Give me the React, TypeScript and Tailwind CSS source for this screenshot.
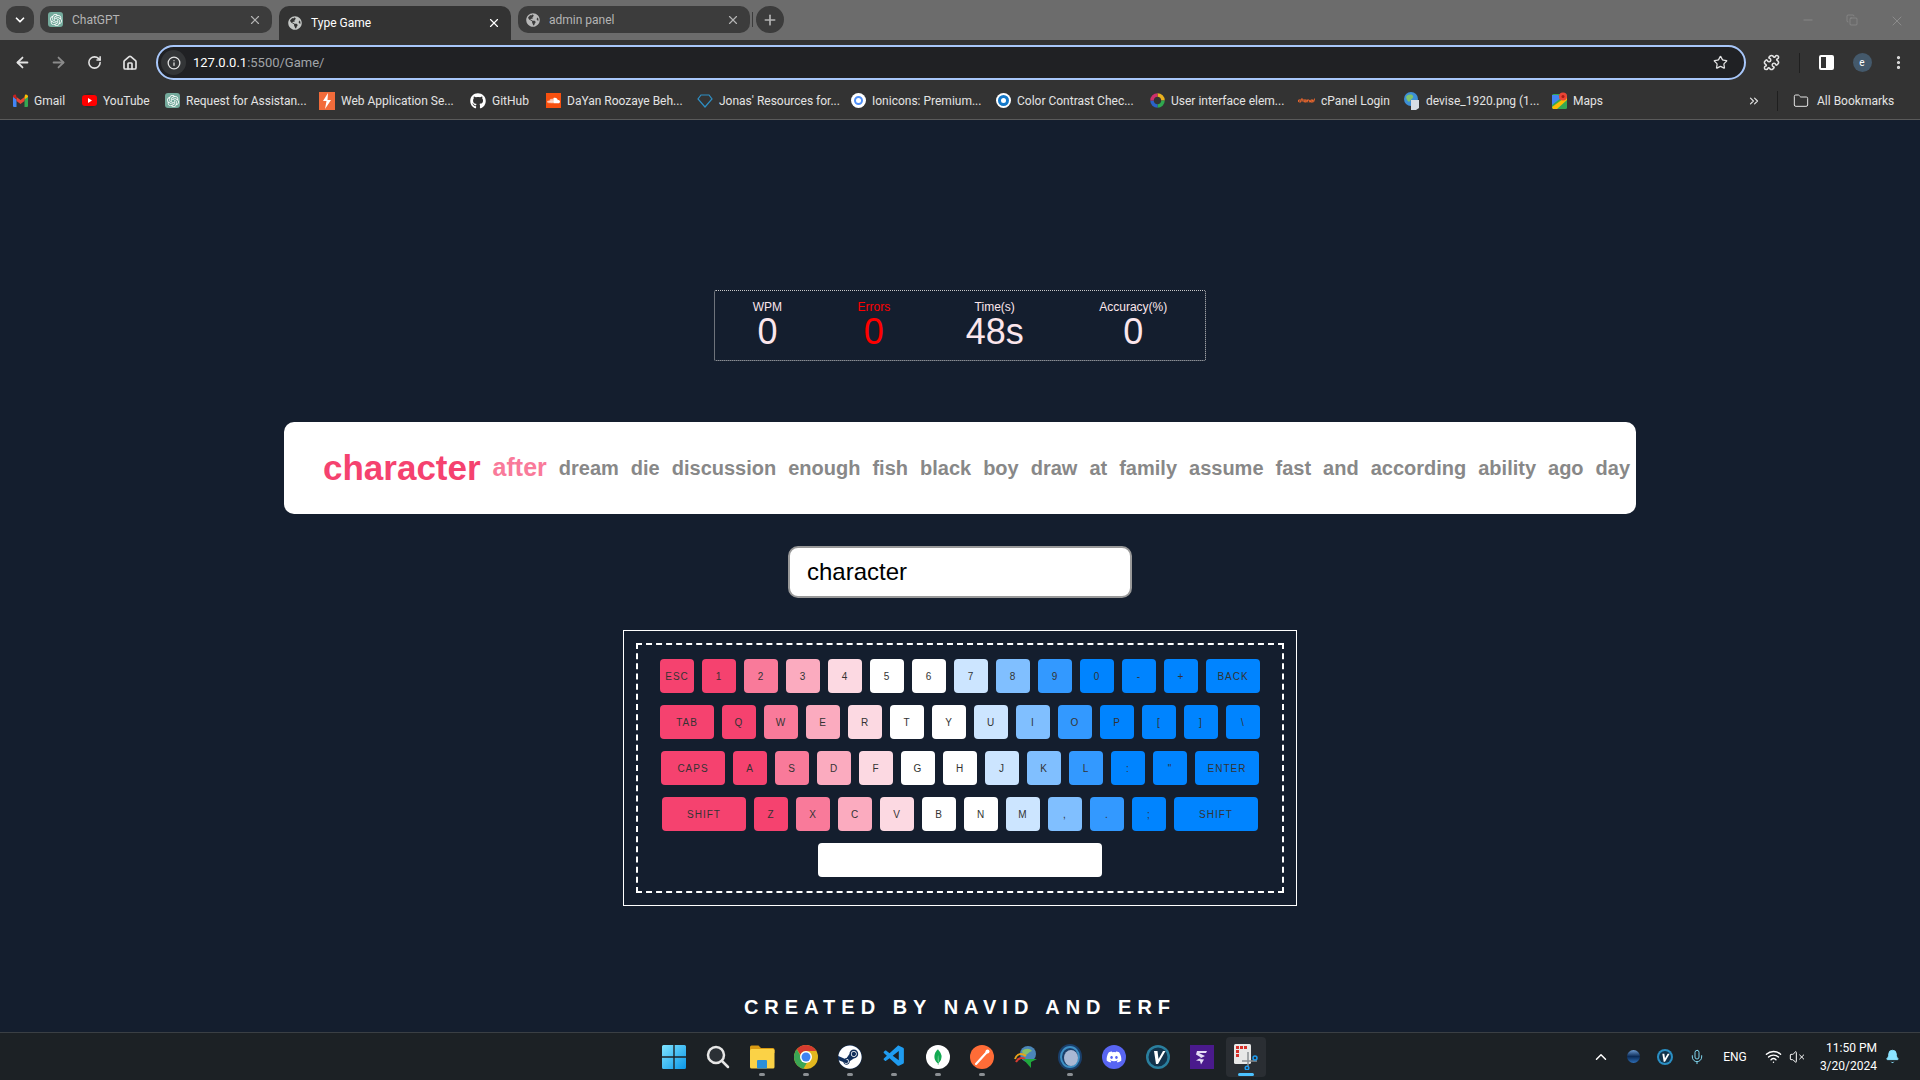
import React from "react";
import {
  ArrowLeft,
  ArrowRight,
  RotateCw,
  Home,
  Info,
  Star,
  Puzzle,
  EllipsisVertical,
  X,
  Plus,
  ChevronDown,
  ChevronUp,
  ChevronsRight,
  Folder,
  Minus,
  Copy,
  Mic,
  Wifi,
  VolumeX,
  Bell,
} from "lucide-react";
import { FaGlobeAmericas, FaGithub, FaSoundcloud, FaDiscord, FaSteam } from "react-icons/fa";
import { SiOpenai, SiCpanel, SiMongodb } from "react-icons/si";
import { VscVscode } from "react-icons/vsc";

const uiFont = "font-['Roboto',sans-serif]";

const OpenAiIcon = () => (
  <span className="flex w-[15px] h-[15px] items-center justify-center rounded-[3px] bg-[#74aa9c]">
    <SiOpenai className="text-white" size={12} />
  </span>
);

const GmailIcon = () => (
  <svg width="15" height="13" viewBox="0 0 15 13">
    <path d="M0 2v10a1 1 0 0 0 1 1h2.5V5.5z" fill="#4285f4" />
    <path d="M15 2v10a1 1 0 0 1-1 1h-2.5V5.5z" fill="#34a853" />
    <path d="M3.5 3v4L7.5 10l4-3V3l-4 3z" fill="#ea4335" />
    <path d="M0 2.5C0 .8 2 0 3 .9l.5 2.1v2.5L0 3z" fill="#c5221f" />
    <path d="M15 2.5C15 .8 13 0 12 .9l-.5 2.1v2.5L15 3z" fill="#fbbc04" />
  </svg>
);

const YoutubeIcon = () => (
  <span className="flex w-[15px] h-[15px] items-center justify-center rounded-full bg-[#2b2b2b]">
    <svg width="15" height="11" viewBox="0 0 15 11">
      <rect width="15" height="11" rx="3" fill="#ff0000" />
      <path d="M6 3v5l4-2.500z" fill="#fff" />
    </svg>
  </span>
);

const BurpIcon = () => (
  <svg width="16" height="18" viewBox="0 0 16 18">
    <rect width="16" height="18" fill="#f26b3a" />
    <path d="M9 1 4 9h3.500L6 17l6-9H8.500z" fill="#fff" />
  </svg>
);

const JonasIcon = () => (
  <svg width="16" height="14" viewBox="0 0 16 14" fill="none" stroke="#2f8fc4" strokeWidth="1.2">
    <path d="M4 1h8l3 4-7 8-7-8z" />
  </svg>
);

const IoniconsIcon = () => (
  <span className="flex w-[15px] h-[15px] items-center justify-center rounded-full bg-white">
    <span className="w-[9px] h-[9px] rounded-full border-2 border-[#4f8ff7]" />
  </span>
);

const ContrastIcon = () => (
  <span className="flex w-[15px] h-[15px] items-center justify-center rounded-full bg-white">
    <span className="flex w-[11px] h-[11px] items-center justify-center rounded-full bg-[#1478c8]">
      <span className="w-[5px] h-[5px] rounded-full bg-white" />
    </span>
  </span>
);

const UxIcon = () => (
  <svg width="15" height="15" viewBox="0 0 15 15" fill="none" strokeWidth="3.500">
    <path d="M7.500 2A5.500 5.500 0 0 1 13 7.500" stroke="#e8b01e" />
    <path d="M13 7.500A5.500 5.500 0 0 1 7.500 13" stroke="#2fa84f" />
    <path d="M7.500 13A5.500 5.500 0 0 1 2 7.500" stroke="#2a62c9" />
    <path d="M2 7.500A5.500 5.500 0 0 1 7.500 2" stroke="#cc2f6b" />
  </svg>
);

const DeviseIcon = () => (
  <svg width="17" height="18" viewBox="0 0 17 18">
    <circle cx="8" cy="7" r="7" fill="#3d8fd6" />
    <path d="M3 5c2-3 6-3 7-1s-2 3-3 5-3 0-4-4z" fill="#7fc36b" />
    <path d="M8 8h8v8l-3 2H8z" fill="#d7dde4" />
  </svg>
);

const MapsIcon = () => (
  <svg width="15" height="17" viewBox="0 0 15 17">
    <rect y="2" width="15" height="15" rx="1.500" fill="#34a853" />
    <path d="M0 15 15 4v4L5 17H1z" fill="#fbbc04" />
    <path d="M0 3h6l3 3-9 7z" fill="#4285f4" />
    <circle cx="11" cy="4.500" r="4" fill="#ea4335" />
    <circle cx="11" cy="4.500" r="1.500" fill="#a51d14" />
  </svg>
);

const bookmarks = [
  { label: "Gmail", icon: <GmailIcon />, width: "w-[69px]" },
  { label: "YouTube", icon: <YoutubeIcon />, width: "w-[83px]" },
  { label: "Request for Assistan...", icon: <OpenAiIcon />, width: "w-[154px]" },
  { label: "Web Application Se...", icon: <BurpIcon />, width: "w-[151px]" },
  { label: "GitHub", icon: <FaGithub size={16} className="text-white" />, width: "w-[76px]" },
  {
    label: "DaYan Roozaye Beh...",
    icon: (
      <span className="flex w-[15px] h-[15px] items-center justify-center bg-[#f7500f]">
        <FaSoundcloud size={13} className="text-white" />
      </span>
    ),
    width: "w-[151px]",
  },
  { label: "Jonas' Resources for...", icon: <JonasIcon />, width: "w-[154px]" },
  { label: "Ionicons: Premium...", icon: <IoniconsIcon />, width: "w-[145px]" },
  { label: "Color Contrast Chec...", icon: <ContrastIcon />, width: "w-[154px]" },
  { label: "User interface elem...", icon: <UxIcon />, width: "w-[148px]" },
  { label: "cPanel Login", icon: <SiCpanel size={17} className="text-[#ff6c2c]" />, width: "w-[105px]" },
  { label: "devise_1920.png (1...", icon: <DeviseIcon />, width: "w-[149px]" },
  { label: "Maps", icon: <MapsIcon />, width: "w-[60px]" },
];

const Tab = ({ title, icon, active }: { title: string; icon: React.ReactNode; active?: boolean }) => (
  <div
    className={
      active
        ? "flex items-center w-[232px] h-[34px] pl-[9px] pr-[10px] rounded-t-[10px] bg-[#333333] text-white self-start"
        : "flex items-center w-[232px] h-[27px] pl-[8px] pr-[10px] rounded-[10px] bg-[#3c3c3c] text-[#b4b4b4] self-start"
    }
  >
    {icon}
    <span className="ml-[9px] text-[12px] flex-1">{title}</span>
    <X size={14} strokeWidth={2} />
  </div>
);

const Chrome = () => (
  <header className={`shrink-0 ${uiFont}`}>
    <div className="relative flex h-[40px] pt-[6px] pl-[6px] bg-[#6c6c6c]">
      <div className="flex w-[28px] h-[27px] items-center justify-center rounded-[10px] bg-[#3c3c3c] text-white">
        <ChevronDown size={14} strokeWidth={3} />
      </div>
      <div className="ml-[6px] flex gap-[7px]">
        <Tab title="ChatGPT" icon={<OpenAiIcon />} />
        <Tab title="Type Game" active icon={<FaGlobeAmericas size={14} className="text-[#c4c7c5]" />} />
        <Tab title="admin panel" icon={<FaGlobeAmericas size={14} className="text-[#b8b8b8]" />} />
      </div>
      <div className="ml-[2px] mt-[6px] w-px h-[15px] bg-[#3c3c3c]" />
      <div className="ml-[3px] flex w-[28px] h-[27px] items-center justify-center rounded-full bg-[#3c3c3c] text-[#b4b4b4]">
        <Plus size={16} strokeWidth={2.500} />
      </div>
      <div className="ml-auto flex items-start text-[#9b9b9b] pt-[7px] pr-[15px] gap-[31px]">
        <Minus size={14} strokeWidth={1} />
        <Copy size={12} strokeWidth={1} className="mt-[1px]" />
        <X size={16} strokeWidth={1} />
      </div>
    </div>

    <div className="flex items-center h-[45px] pl-[4px] pr-[4px] pb-[5px] pt-[5px] bg-[#333333] text-[#e3e3e3]">
      <div className="flex w-[36px] justify-center"><ArrowLeft size={17} strokeWidth={2.500} /></div>
      <div className="flex w-[36px] justify-center text-[#8b8b8b]"><ArrowRight size={17} strokeWidth={2.500} /></div>
      <div className="flex w-[36px] justify-center"><RotateCw size={15} strokeWidth={2.500} /></div>
      <div className="flex w-[36px] justify-center"><Home size={16} strokeWidth={2.500} /></div>
      <div className="ml-[8px] flex flex-1 items-center h-[35px] pl-[3px] pr-[16px] rounded-full border-2 border-[#a8c7fa] bg-[#202124]">
        <span className="flex w-[25px] h-[25px] items-center justify-center rounded-full bg-[#333537]">
          <Info size={14} strokeWidth={2.200} />
        </span>
        <span className="ml-[7px] text-[13px] text-white">
          127.0.0.1<span className="text-[#a0a4a8]">:5500/Game/</span>
        </span>
        <Star size={15} strokeWidth={2} className="ml-auto" />
      </div>
      <div className="ml-[7px] flex w-[36px] justify-center"><Puzzle size={17} strokeWidth={2.200} /></div>
      <div className="ml-[10px] w-px h-[20px] bg-[#1f1f1f]" />
      <div className="ml-[8px] flex w-[36px] justify-center">
        <span className="flex w-[15px] h-[15px] justify-end rounded-[2px] border-2 border-white">
          <span className="w-[6px] bg-white" />
        </span>
      </div>
      <div className="flex w-[36px] justify-center">
        <span className="flex w-[19px] h-[19px] items-center justify-center rounded-full bg-[#44596b] text-[10px] text-white">e</span>
      </div>
      <div className="flex w-[36px] justify-center"><EllipsisVertical size={17} strokeWidth={2.500} /></div>
    </div>

    <div className="flex items-center h-[35px] pl-[13px] pb-[3px] bg-[#333333] text-[12px] text-[#e3e3e3] border-b border-[#5a5a5a]">
      {bookmarks.map((b) => (
        <div key={b.label} className={`flex items-center shrink-0 gap-[6px] whitespace-nowrap ${b.width}`}>
          {b.icon}
          <span>{b.label}</span>
        </div>
      ))}
      <ChevronsRight size={14} strokeWidth={2} className="ml-[135px]" />
      <div className="ml-[16px] w-px h-[20px] bg-[#1f1f1f]" />
      <Folder size={16} strokeWidth={1.500} className="ml-[15px]" />
      <span className="ml-[8px] whitespace-nowrap">All Bookmarks</span>
    </div>
  </header>
);

const StatCell = ({ label, value, red }: { label: string; value: string; red?: boolean }) => (
  <div className={red ? "flex flex-col items-center text-[#ff0000]" : "flex flex-col items-center text-[#fbe6ec]"}>
    <span className="text-[12px] leading-[14px]">{label}</span>
    <span className="text-[36px] leading-[36px]">{value}</span>
  </div>
);

const words = [
  "dream", "die", "discussion", "enough", "fish", "black", "boy", "draw", "at",
  "family", "assume", "fast", "and", "according", "ability", "ago", "day",
];

const pink1 = "bg-[#f5426f]";
const pink2 = "bg-[#f97a9a]";
const pink3 = "bg-[#fbabbf]";
const pink4 = "bg-[#fcd9e2]";
const white = "bg-white";
const blue1 = "bg-[#cce5ff]";
const blue2 = "bg-[#80bfff]";
const blue3 = "bg-[#3399ff]";
const blue4 = "bg-[#0084ff]";

type KeyDef = [string, string, string?];

const keyRows: KeyDef[][] = [
  [
    ["ESC", pink1], ["1", pink1], ["2", pink2], ["3", pink3], ["4", pink4], ["5", white], ["6", white],
    ["7", blue1], ["8", blue2], ["9", blue3], ["0", blue4], ["-", blue4], ["+", blue4], ["BACK", blue4, "w-[54px]"],
  ],
  [
    ["TAB", pink1, "w-[54px]"], ["Q", pink1], ["W", pink2], ["E", pink3], ["R", pink4], ["T", white], ["Y", white],
    ["U", blue1], ["I", blue2], ["O", blue3], ["P", blue4], ["[", blue4], ["]", blue4], ["\\", blue4],
  ],
  [
    ["CAPS", pink1, "w-[64px]"], ["A", pink1], ["S", pink2], ["D", pink3], ["F", pink4], ["G", white], ["H", white],
    ["J", blue1], ["K", blue2], ["L", blue3], [":", blue4], ['"', blue4], ["ENTER", blue4, "w-[64px]"],
  ],
  [
    ["SHIFT", pink1, "w-[84px]"], ["Z", pink1], ["X", pink2], ["C", pink3], ["V", pink4], ["B", white], ["N", white],
    ["M", blue1], [",", blue2], [".", blue3], [";", blue4], ["SHIFT", blue4, "w-[84px]"],
  ],
];

const Keyboard = () => (
  <div className="mt-[32px] w-[674px] h-[276px] p-[12px] border border-white">
    <div className="flex flex-col items-center gap-[12px] w-[648px] h-[250px] pt-[14px] border-2 border-dashed border-white">
      {keyRows.map((row, i) => (
        <div key={i} className="flex gap-[8px]">
          {row.map(([label, color, width], j) => (
            <div
              key={j}
              className={`flex h-[34px] items-center justify-center rounded-[4px] text-[10px] tracking-[1px] text-[#333333] ${color} ${width ?? "w-[34px]"}`}
            >
              {label}
            </div>
          ))}
        </div>
      ))}
      <div className="w-[284px] h-[34px] rounded-[4px] bg-white" />
    </div>
  </div>
);

const TaskIcon = ({ children, dot, active }: { children: React.ReactNode; dot?: boolean; active?: boolean }) => (
  <div className={active ? "relative flex w-[40px] h-[40px] mx-[2px] items-center justify-center rounded-[4px] bg-[#2a2e33]" : "relative flex w-[44px] h-[40px] items-center justify-center"}>
    {children}
    {dot && <span className="absolute bottom-[1px] w-[6px] h-[3px] rounded-full bg-[#8b8f93]" />}
    {active && <span className="absolute bottom-[1px] w-[16px] h-[3px] rounded-full bg-[#4cc2ff]" />}
  </div>
);

const Taskbar = () => (
  <footer className={`shrink-0 grid grid-cols-[1fr_auto_1fr] items-center h-[48px] bg-[#1c2125] border-t border-[#3a3f44] ${uiFont}`}>
    <div />
    <div className="flex">
      <TaskIcon>
        <svg width="24" height="24" viewBox="0 0 24 24">
          <defs>
            <linearGradient id="win" x1="0" y1="0" x2="1" y2="1">
              <stop offset="0" stopColor="#7fe4ff" />
              <stop offset="1" stopColor="#0a96e8" />
            </linearGradient>
          </defs>
          <path d="M0 1.500A1.500 1.500 0 0 1 1.500 0h9.800v11.300H0zM12.700 0h9.800A1.500 1.500 0 0 1 24 1.500v9.800H12.700zM0 12.700h11.300V24H1.500A1.500 1.500 0 0 1 0 22.500zM12.700 12.700H24v9.800a1.500 1.500 0 0 1-1.500 1.500h-9.800z" fill="url(#win)" />
        </svg>
      </TaskIcon>
      <TaskIcon>
        <svg width="24" height="24" viewBox="0 0 24 24" fill="none">
          <circle cx="10" cy="10" r="8" stroke="#e6e6e6" strokeWidth="2.500" fill="#2b3035" />
          <path d="m16 16 6 6" stroke="#e6e6e6" strokeWidth="2.500" strokeLinecap="round" />
        </svg>
      </TaskIcon>
      <TaskIcon dot>
        <svg width="26" height="24" viewBox="0 0 26 24">
          <path d="M1 2a1.500 1.500 0 0 1 1.500-1.500h7L12 3h12a1.500 1.500 0 0 1 1.500 1.500V8H1z" fill="#d99a12" />
          <rect x="1" y="4" width="24.500" height="19.500" rx="1.500" fill="#fbd246" />
          <rect x="8" y="15" width="10" height="8.500" rx="1" fill="#2a8fd8" />
        </svg>
      </TaskIcon>
      <TaskIcon dot>
        <svg width="24" height="24" viewBox="0 0 24 24">
          <circle cx="12" cy="12" r="12" fill="#e2b71e" />
          <path d="M12 0a12 12 0 0 1 10.400 6H12a6 6 0 0 0-5.600 3.800L2.800 4.300A12 12 0 0 1 12 0z" fill="#d63b2f" />
          <path d="M2.800 4.300 7.800 13a6 6 0 0 0 5 5l-3.400 5.700A12 12 0 0 1 2.800 4.300z" fill="#3aa655" />
          <circle cx="12" cy="12" r="6" fill="#fff" />
          <circle cx="12" cy="12" r="4.500" fill="#3f83f0" />
        </svg>
      </TaskIcon>
      <TaskIcon dot>
        <span className="flex w-[24px] h-[24px] items-center justify-center rounded-full bg-[#12305c]">
          <FaSteam size={24} className="text-white" />
        </span>
      </TaskIcon>
      <TaskIcon dot>
        <VscVscode size={25} className="text-[#1f9cf0]" />
      </TaskIcon>
      <TaskIcon dot>
        <span className="flex w-[24px] h-[24px] items-center justify-center rounded-full bg-white">
          <SiMongodb size={16} className="text-[#13aa52]" />
        </span>
      </TaskIcon>
      <TaskIcon dot>
        <svg width="24" height="24" viewBox="0 0 24 24">
          <circle cx="12" cy="12" r="12" fill="#ff6c37" />
          <path d="M6 19 17 7" stroke="#fff" strokeWidth="2.200" strokeLinecap="round" />
          <circle cx="17.500" cy="6.500" r="2" fill="#fff" />
        </svg>
      </TaskIcon>
      <TaskIcon>
        <svg width="24" height="24" viewBox="0 0 24 24" fill="none">
          <circle cx="14" cy="9" r="8" fill="#4b86b8" />
          <path d="M8 6c3-3 8-3 10 0-3 1-6 4-8 6z" fill="#88c06a" />
          <path d="M1 14C3 8 8 8 12 11" stroke="#e8a21a" strokeWidth="2" />
          <path d="M2 17c2-4 6-5 9-3" stroke="#d63b2f" strokeWidth="2" />
          <path d="M9 14h14l-6 3v6z" fill="#1fa83c" />
        </svg>
      </TaskIcon>
      <TaskIcon dot>
        <svg width="24" height="26" viewBox="0 0 24 26">
          <ellipse cx="12" cy="13" rx="12" ry="13" fill="#1a3f6b" />
          <ellipse cx="12" cy="13" rx="9" ry="10" fill="none" stroke="#3d8fc4" strokeWidth="2" />
          <ellipse cx="13" cy="14" rx="7" ry="8" fill="#a9b8d4" />
        </svg>
      </TaskIcon>
      <TaskIcon>
        <span className="flex w-[24px] h-[24px] items-center justify-center rounded-full bg-[#5865f2]">
          <FaDiscord size={16} className="text-white" />
        </span>
      </TaskIcon>
      <TaskIcon>
        <svg width="24" height="24" viewBox="0 0 24 24">
          <circle cx="12" cy="12" r="12" fill="#2a7f9e" />
          <circle cx="12" cy="12" r="9.500" fill="#12324a" />
          <path d="M8 6h3.500l1 8L17 6h2.500L12 19H10z" fill="#fff" />
        </svg>
      </TaskIcon>
      <TaskIcon>
        <svg width="24" height="24" viewBox="0 0 24 24">
          <rect width="24" height="24" fill="#4a1a8c" />
          <path d="M7 6h10l-1 2H9l6 3-6 3 5 .5-3 5-1-3.500-4-.5 5-3-5-3z" fill="#e4dcf5" />
        </svg>
      </TaskIcon>
      <TaskIcon active>
        <svg width="24" height="26" viewBox="0 0 24 26">
          <rect x="0" y="0" width="17" height="20" rx="1.500" fill="#e8e8e8" />
          <rect x="2" y="2" width="3" height="3" fill="#d6302a" />
          <rect x="6" y="2" width="3" height="3" fill="#d6302a" />
          <rect x="10" y="2" width="3" height="3" fill="#d6302a" />
          <rect x="2" y="6" width="3" height="3" fill="#d6302a" />
          <rect x="2" y="10" width="3" height="3" fill="#d6302a" />
          <path d="M14 8v15M8 17h15" stroke="#8b8f93" strokeWidth="1.500" />
          <circle cx="21" cy="14" r="2" fill="none" stroke="#1f9cf0" strokeWidth="1.500" />
          <circle cx="13" cy="24" r="1.800" fill="none" stroke="#1f9cf0" strokeWidth="1.500" />
        </svg>
      </TaskIcon>
    </div>
    <div className="flex items-center justify-end pr-[13px] text-white">
      <div className="flex w-[32px] justify-center"><ChevronUp size={18} strokeWidth={2} /></div>
      <div className="flex w-[32px] justify-center">
        <span className="w-[13px] h-[13px] rounded-full bg-gradient-to-b from-[#6d9bd1] via-[#0b2b57] to-[#2e6fb8]" />
      </div>
      <div className="flex w-[32px] justify-center">
        <svg width="16" height="16" viewBox="0 0 24 24">
          <circle cx="12" cy="12" r="12" fill="#2a8fc4" />
          <circle cx="12" cy="12" r="9" fill="#12324a" />
          <path d="M8 7h3l1 7 4-7h3l-7 12h-2z" fill="#fff" />
        </svg>
      </div>
      <div className="flex w-[32px] justify-center text-[#7fd6f0]"><Mic size={16} strokeWidth={1.500} /></div>
      <span className="flex w-[44px] justify-center text-[12px]">ENG</span>
      <div className="ml-[4px] flex w-[24px] justify-center"><Wifi size={17} strokeWidth={2} /></div>
      <div className="flex w-[24px] justify-center"><VolumeX size={16} strokeWidth={1.500} /></div>
      <div className="flex flex-col items-end w-[68px] text-[12px] leading-[18px]">
        <span>11:50 PM</span>
        <span>3/20/2024</span>
      </div>
      <div className="flex w-[30px] justify-center text-[#8be3ff]"><Bell size={15} fill="currentColor" strokeWidth={1.500} /></div>
    </div>
  </footer>
);

export default function App() {
  return (
    <div className="flex flex-col w-full h-screen overflow-hidden bg-[#141e2e]">
      <Chrome />
      <main className="flex flex-1 flex-col items-center pt-[170px] font-['Liberation_Sans',Arial,sans-serif]">
        <div className="flex justify-around items-start w-[492px] h-[71px] pt-[9px] rounded-[2px] border border-dotted border-[#c8c8c8]">
          <StatCell label="WPM" value="0" />
          <StatCell label="Errors" value="0" red />
          <StatCell label="Time(s)" value="48s" />
          <StatCell label="Accuracy(%)" value="0" />
        </div>

        <div className="mt-[61px] flex items-center w-[1352px] h-[92px] pl-[39px] rounded-[10px] bg-white whitespace-nowrap overflow-hidden font-bold">
          <span className="text-[35px] text-[#f5426f]">character</span>
          <span className="ml-[12px] text-[25px] text-[#f97a9a]">after</span>
          <div className="ml-[12px] flex gap-[12px] text-[20px] text-[#888888]">
            {words.map((w) => (
              <span key={w}>{w}</span>
            ))}
          </div>
        </div>

        <div className="mt-[32px] flex items-center w-[344px] h-[52px] pl-[17px] rounded-[10px] border-2 border-[#999999] bg-white text-[24px] text-black">
          character
        </div>

        <Keyboard />

        <p className="mt-[89px] text-[20px] leading-[24px] font-bold tracking-[6px] text-white">CREATED BY NAVID AND ERF</p>
      </main>
      <Taskbar />
    </div>
  );
}
